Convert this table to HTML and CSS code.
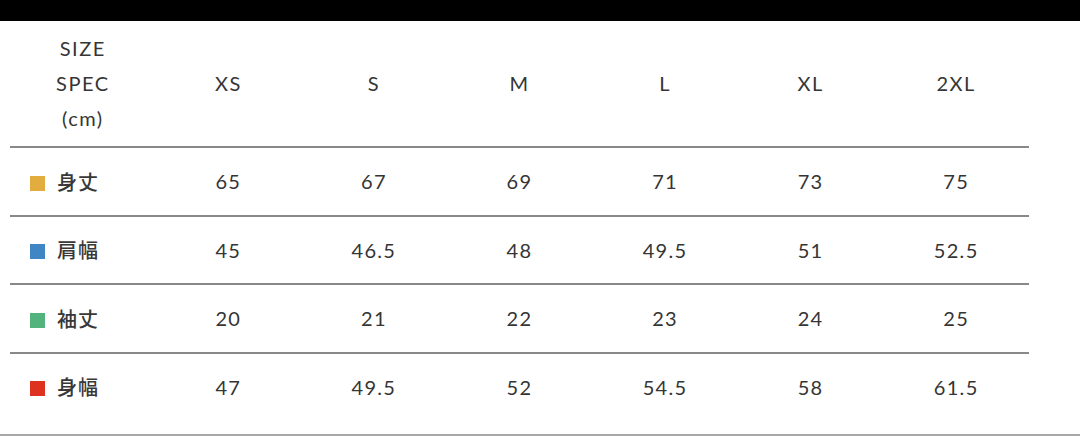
FILE: index.html
```html
<!DOCTYPE html>
<html lang="ja">
<head>
<meta charset="utf-8">
<link rel="stylesheet" href="styles.css">
</head>
<body>
<div class="topbar"></div>
<div class="sheet">
  <table class="spec">
    <thead>
      <tr>
        <th class="lbl-head">SIZE<br>SPEC<br>(cm)</th>
        <th>XS</th><th>S</th><th>M</th><th>L</th><th>XL</th><th>2XL</th>
      </tr>
    </thead>
    <tbody>
      <tr>
        <td class="lbl"><span class="sq yellow"></span>身丈</td>
        <td>65</td><td>67</td><td>69</td><td>71</td><td>73</td><td>75</td>
      </tr>
      <tr>
        <td class="lbl"><span class="sq blue"></span>肩幅</td>
        <td>45</td><td>46.5</td><td>48</td><td>49.5</td><td>51</td><td>52.5</td>
      </tr>
      <tr>
        <td class="lbl"><span class="sq green"></span>袖丈</td>
        <td>20</td><td>21</td><td>22</td><td>23</td><td>24</td><td>25</td>
      </tr>
      <tr class="last">
        <td class="lbl"><span class="sq red"></span>身幅</td>
        <td>47</td><td>49.5</td><td>52</td><td>54.5</td><td>58</td><td>61.5</td>
      </tr>
    </tbody>
  </table>
</div>
<div class="bottomline"></div>
</body>
</html>
```

FILE: styles.css
```css
html, body {
  margin: 0;
  padding: 0;
  background: #ffffff;
}
body {
  width: 1080px;
  height: 436px;
  overflow: hidden;
  font-family: "Lato", "Noto Sans CJK JP", sans-serif;
  color: #353535;
}
.topbar {
  height: 21px;
  background: #000000;
}
.sheet {
  height: 413px;
  padding-left: 10px;
  box-sizing: border-box;
}
.spec {
  width: 1019px;
  border-collapse: collapse;
  table-layout: fixed;
}
.spec th {
  height: 125px;
  padding: 0;
  font-weight: 400;
  font-size: 20px;
  letter-spacing: 1.5px;
  line-height: 35px;
  text-align: center;
  vertical-align: middle;
  border-bottom: 2px solid #888888;
}
.spec td {
  height: 66.5px;
  padding: 0;
  font-size: 20px;
  letter-spacing: 1.3px;
  text-align: center;
  vertical-align: middle;
  border-bottom: 2px solid #888888;
}
.spec tr.last td {
  border-bottom: none;
  height: 66px;
}
.spec td.lbl {
  text-align: left;
  padding-left: 20px;
  font-family: "Noto Sans CJK JP", sans-serif;
  font-size: 20px;
  font-weight: 500;
  letter-spacing: 1px;
  color: #383838;
}
.sq {
  display: inline-block;
  width: 15px;
  height: 15px;
  margin-right: 12px;
  vertical-align: -1px;
}
.yellow { background: #e2ac3f; }
.blue { background: #4186c4; }
.green { background: #52b37c; }
.red { background: #de3220; }
.bottomline {
  height: 2px;
  background: #a8a8a8;
}
```
